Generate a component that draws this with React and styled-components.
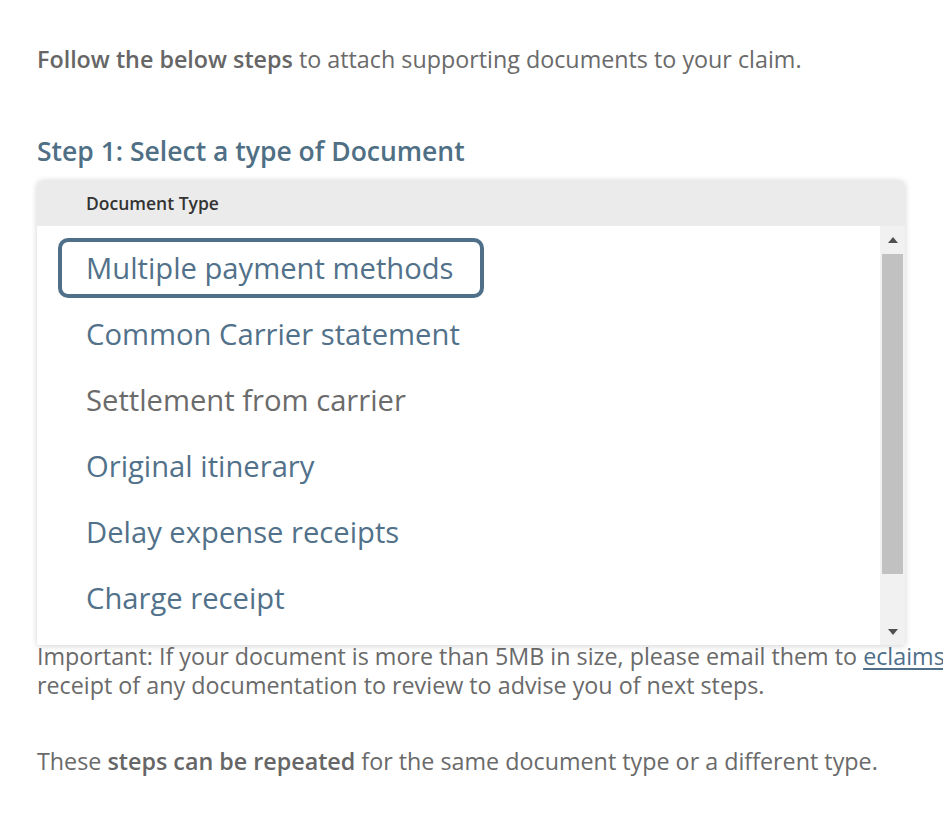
import React from 'react';
import styled, { createGlobalStyle } from 'styled-components';

const GlobalStyle = createGlobalStyle`
  html, body {
    margin: 0;
    padding: 0;
    background: #fff;
    overflow: hidden;
  }
  body {
    font-family: "Open Sans", "Noto Sans", sans-serif;
    color: #666;
  }
`;

const Page = styled.main`
  padding: 45px 0 0 37px;
  width: 1200px;
`;

const Text = styled.p`
  margin: ${({ top }) => top || 0}px 0 0;
  font-size: 23.3px;
  line-height: 29px;
  color: #6a6a6a;
  white-space: nowrap;

  strong {
    font-weight: 600;
    color: #666;
  }
`;

const StepTitle = styled.h2`
  margin: 60px 0 0;
  font-size: 26.5px;
  line-height: 34px;
  font-weight: 600;
  color: #4f6f85;
`;

const Field = styled.div`
  position: relative;
  margin-top: 12px;
  height: 462px;
  width: 868px;
`;

const Listbox = styled.div`
  position: absolute;
  top: 0;
  left: 0;
  right: 0;
  z-index: 2;
  background: #fff;
  border-radius: 6px 6px 2px 2px;
  box-shadow: 0 1px 6px rgba(0, 0, 0, 0.18);
  overflow: hidden;
`;

const ListHeader = styled.div`
  height: 46px;
  display: flex;
  align-items: center;
  padding-left: 49px;
  background: #ebebeb;
  font-size: 17.5px;
  font-weight: 600;
  color: #333;
`;

const ListBody = styled.div`
  display: flex;
  height: 419px;
`;

const Options = styled.ul`
  flex: 1;
  list-style: none;
  margin: 0;
  padding: 9px 0 0;
`;

const OptionRow = styled.li`
  height: 66px;
  display: flex;
  align-items: center;
`;

const Option = styled.span`
  box-sizing: border-box;
  display: inline-flex;
  align-items: center;
  height: 60px;
  margin-left: 21px;
  padding: 0 ${({ focused }) => (focused ? 26 : 28)}px 0 ${({ focused }) => (focused ? 24 : 28)}px;
  border: ${({ focused }) => (focused ? '4px solid #50708a' : 'none')};
  border-radius: 10px;
  font-size: 29.2px;
  color: ${({ muted }) => (muted ? '#6b6b6b' : '#52718a')};
`;

const Scrollbar = styled.div`
  width: 25px;
  background: #f1f1f1;
  display: flex;
  flex-direction: column;
  align-items: center;
`;

const Arrow = styled.div`
  width: 0;
  height: 0;
  margin: ${({ down }) => (down ? '9px 0 10px' : '11px 0 11px')};
  border-left: 5px solid transparent;
  border-right: 5px solid transparent;
  ${({ down }) => (down ? 'border-top' : 'border-bottom')}: 6px solid #505050;
`;

const Thumb = styled.div`
  width: 21px;
  height: 320px;
  background: #c1c1c1;
`;

const Track = styled.div`
  flex: 1;
`;

const MailLink = styled.a`
  color: #50708a;
  text-decoration: underline;
  text-underline-offset: 3px;
`;

const documentTypes = [
  { label: 'Multiple payment methods', focused: true },
  { label: 'Common Carrier statement' },
  { label: 'Settlement from carrier', muted: true },
  { label: 'Original itinerary' },
  { label: 'Delay expense receipts' },
  { label: 'Charge receipt' },
];

export default function App() {
  return (
    <>
      <GlobalStyle />
      <Page>
        <Text>
          <strong>Follow the below steps</strong> to attach supporting documents to your claim.
        </Text>

        <StepTitle>Step 1: Select a type of Document</StepTitle>

        <Field>
          <Listbox role="listbox">
            <ListHeader>Document Type</ListHeader>
            <ListBody>
              <Options>
                {documentTypes.map((item) => (
                  <OptionRow key={item.label}>
                    <Option focused={item.focused} muted={item.muted}>
                      {item.label}
                    </Option>
                  </OptionRow>
                ))}
              </Options>
              <Scrollbar>
                <Arrow />
                <Thumb />
                <Track />
                <Arrow down />
              </Scrollbar>
            </ListBody>
          </Listbox>
        </Field>

        <Text>
          Important: If your document is more than 5MB in size, please email them to{' '}
          <MailLink href="#">eclaimsliaison@claims.com</MailLink> and we will confirm
          <br />
          receipt of any documentation to review to advise you of next steps.
        </Text>

        <Text top={47}>
          These <strong>steps can be repeated</strong> for the same document type or a different type.
        </Text>
      </Page>
    </>
  );
}
